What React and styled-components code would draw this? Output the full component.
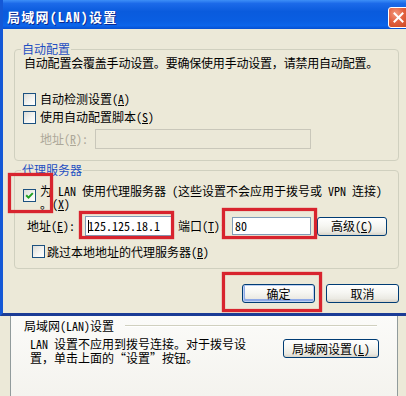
import React from "react";
import styled, { createGlobalStyle, css } from "styled-components";

const Global = createGlobalStyle`
  html, body { margin: 0; padding: 0; background: #ECE9D8; }
  body {
    font-family: "Noto Sans CJK SC", "Noto Sans CJK JP", sans-serif;
    font-size: 12px;
    color: #000;
    font-feature-settings: "hwid" 1;
    text-spacing-trim: space-all;
  }
  #root { width: 406px; height: 396px; overflow: hidden; }
  u { text-decoration: underline; text-underline-offset: 1px; }
`;

const Wide = styled.span`
  font-feature-settings: "hwid" 0;
  text-spacing-trim: space-all;
`;

const Screen = styled.div`
  position: relative;
  width: 406px;
  height: 396px;
  overflow: hidden;
  background: #ECE9D8;
`;

const Window = styled.div`
  width: 412px;
  box-sizing: border-box;
  border-left: 3px solid #1458d6;
  border-bottom: 3px solid #1b3c96;
  background: #ECE9D8;
`;

const TitleBar = styled.div`
  height: 29px;
  box-sizing: border-box;
  padding: 5px 3px 0 4px;
  display: flex;
  align-items: center;
  justify-content: space-between;
  background: linear-gradient(180deg, #3d8ff7 0%, #1c6ae9 12%, #0a5bdd 40%, #0a5ee2 72%, #0c65ea 88%, #0650d2 100%);
`;

const TitleText = styled.div`
  color: #fff;
  font-weight: bold;
  font-size: 13px;
  letter-spacing: 1.3px;
  line-height: 16px;
  text-shadow: 1px 1px 0 #0b2a8f;
`;

const CloseButton = styled.div`
  width: 21px;
  height: 21px;
  box-sizing: border-box;
  border: 1px solid #fff;
  border-radius: 3px;
  background: radial-gradient(circle at 35% 30%, #f39a7e 0%, #e2603f 45%, #c94520 100%);
  display: flex;
  align-items: center;
  justify-content: center;
`;

const DialogBody = styled.div`
  height: 284px;
  box-sizing: border-box;
  padding: 13px 13px 0 11px;
  display: flex;
  flex-direction: column;
`;

const Group = styled.fieldset`
  margin: ${(p) => p.$mt || 0}px 0 0;
  padding: 0 8px ${(p) => p.$pb}px 8px;
  border: 1px solid #d0d0bf;
  border-radius: 4px;
  min-width: 0;
  display: flex;
  flex-direction: column;
`;

const Legend = styled.legend`
  padding: 0 1px;
  margin-left: -2px;
  color: #1f4fc2;
  font-size: 12px;
  line-height: 14px;
`;

const Desc = styled.div`
  line-height: 14px;
  margin-left: 1px;
  white-space: nowrap;
  letter-spacing: -0.2px;
`;

const CheckRow = styled.div`
  display: flex;
  align-items: ${(p) => p.$align || "center"};
  height: ${(p) => (p.$h ? `${p.$h}px` : "auto")};
  margin-top: ${(p) => p.$mt || 0}px;
  margin-left: ${(p) => p.$ml || 0}px;
  gap: ${(p) => (p.$gap != null ? p.$gap : 4)}px;
`;

const CheckBox = styled.span`
  flex: none;
  width: 13px;
  height: 13px;
  box-sizing: border-box;
  border: 1px solid #1c5180;
  background: linear-gradient(135deg, #dcdcd7 0%, #f6f6f3 60%, #ffffff 100%);
  margin-top: ${(p) => p.$mt || 0}px;
  display: flex;
  align-items: center;
  justify-content: center;
`;

const Label = styled.span`
  line-height: ${(p) => p.$lh || 14}px;
  white-space: nowrap;
  color: ${(p) => (p.$disabled ? "#aca899" : "#000")};
`;

const FieldRow = styled.div`
  display: flex;
  align-items: center;
  height: 20px;
  margin-top: ${(p) => p.$mt || 0}px;
  margin-left: ${(p) => p.$ml || 0}px;
`;

const FieldLabel = styled.span`
  flex: none;
  width: ${(p) => p.$w}px;
  margin-left: ${(p) => p.$ml || 0}px;
  line-height: 14px;
  white-space: nowrap;
  color: ${(p) => (p.$disabled ? "#aca899" : "#000")};
`;

const TextBox = styled.div`
  flex: none;
  width: ${(p) => p.$w}px;
  height: ${(p) => p.$h}px;
  box-sizing: border-box;
  padding-left: 2px;
  display: flex;
  align-items: center;
  line-height: 14px;
  white-space: nowrap;
  ${(p) =>
    p.$disabled
      ? css`
          border: 1px solid #c9c7ba;
          background: #ebe8d8;
        `
      : css`
          border: 1px solid #7f9db9;
          background: #fff;
        `}
`;

const Caret = styled.span`
  display: inline-block;
  width: 1px;
  height: 13px;
  background: #000;
  margin-right: -1px;
`;

const Button = styled.div`
  flex: none;
  width: ${(p) => p.$w}px;
  height: ${(p) => p.$h || 19}px;
  margin-left: ${(p) => p.$ml || 0}px;
  margin-top: ${(p) => p.$mt || 0}px;
  box-sizing: border-box;
  border: 1px solid #003c74;
  border-radius: 3px;
  background: linear-gradient(180deg, #ffffff 0%, #f6f6f2 45%, #ebeae3 80%, #d8d4c9 100%);
  display: flex;
  align-items: center;
  justify-content: center;
  line-height: 14px;
  white-space: nowrap;
  ${(p) =>
    p.$default &&
    css`
      box-shadow: inset 0 0 0 1px #bcd0f2, inset 1px -2px 0 1px #8ea9e6;
    `}
`;

const ButtonRow = styled.div`
  display: flex;
  justify-content: flex-end;
  gap: 11px;
  margin-top: 15px;
`;

const BackArea = styled.div`
  height: 80px;
  display: flex;
  padding-left: 10px;
`;

const Panel = styled.div`
  width: 388px;
  box-sizing: border-box;
  border-left: 1px solid #919b9c;
  border-right: 1px solid #919b9c;
  background: linear-gradient(180deg, #fbfbf9 0%, #f4f3ee 100%);
  padding: 3px 18px 0 13px;
  display: flex;
  flex-direction: column;
`;

const SectionHeader = styled.div`
  display: flex;
  align-items: center;
  height: 14px;
  line-height: 14px;
`;

const SectionRule = styled.div`
  flex: 1;
  margin: 0 2px 0 11px;
  border-top: 1px solid #d0d0bf;
  border-bottom: 1px solid #ffffff;
`;

const SectionBody = styled.div`
  display: flex;
  align-items: flex-start;
  margin-top: 4px;
`;

const SectionText = styled.div`
  margin-left: 6px;
  line-height: 14px;
  white-space: nowrap;
`;

const SideButton = styled(Button)`
  margin-left: auto;
`;

const Highlight = styled.div`
  position: absolute;
  left: ${(p) => p.$x}px;
  top: ${(p) => p.$y}px;
  width: ${(p) => p.$w}px;
  height: ${(p) => p.$h}px;
  box-sizing: border-box;
  border: 3px solid #d8242e;
  box-shadow: 0 0 1px #d8242e, inset 0 0 1px #d8242e;
  pointer-events: none;
`;

function Check({ checked, mt }) {
  return (
    <CheckBox $mt={mt}>
      {checked && (
        <svg width="9" height="9" viewBox="0 0 9 9">
          <path d="M1.2 4.3 L3.5 6.6 L7.8 2.1" fill="none" stroke="#21a121" strokeWidth="2" />
        </svg>
      )}
    </CheckBox>
  );
}

export default function App() {
  return (
    <>
      <Global />
      <Screen>
        <Window>
          <TitleBar>
            <TitleText>局域网(LAN)设置</TitleText>
            <CloseButton>
              <svg width="11" height="11" viewBox="0 0 11 11">
                <path d="M1.5 1.5 L9.5 9.5 M9.5 1.5 L1.5 9.5" stroke="#fff" strokeWidth="2" strokeLinecap="square" />
              </svg>
            </CloseButton>
          </TitleBar>
          <DialogBody>
            <Group $pb={11}>
              <Legend>自动配置</Legend>
              <Desc>
                自动配置会覆盖手动设置<Wide>。</Wide>要确保使用手动设置<Wide>，</Wide>请禁用自动配置<Wide>。</Wide>
              </Desc>
              <CheckRow $mt={20} $h={18}>
                <Check />
                <Label>
                  自动检测设置(<u>A</u>)
                </Label>
              </CheckRow>
              <CheckRow $h={18}>
                <Check />
                <Label>
                  使用自动配置脚本(<u>S</u>)
                </Label>
              </CheckRow>
              <FieldRow $mt={3} $ml={17}>
                <FieldLabel $w={55} $disabled>
                  地址(<u>R</u>):
                </FieldLabel>
                <TextBox $w={216} $h={20} $disabled />
              </FieldRow>
            </Group>
            <Group $mt={2} $pb={8}>
              <Legend>代理服务器</Legend>
              <CheckRow $align="flex-start" $mt={7}>
                <Check checked mt={5} />
                <Label $lh={13}>
                  为 LAN 使用代理服务器 (这些设置不会应用于拨号或 VPN 连接)
                  <br />
                  <Wide>。</Wide>(<u>X</u>)
                </Label>
              </CheckRow>
              <FieldRow $mt={6} $ml={4}>
                <FieldLabel $w={58}>
                  地址(<u>E</u>):
                </FieldLabel>
                <TextBox $w={88} $h={20}>
                  <Caret />
                  125.125.18.1
                </TextBox>
                <FieldLabel $w={54} $ml={5}>
                  端口(<u>T</u>):
                </FieldLabel>
                <TextBox $w={79} $h={18}>80</TextBox>
                <Button $w={70} $h={19} $ml={6}>
                  高级(<u>C</u>)
                </Button>
              </FieldRow>
              <CheckRow $mt={7} $ml={9} $h={17} $gap={2}>
                <Check />
                <Label>
                  跳过本地地址的代理服务器(<u>B</u>)
                </Label>
              </CheckRow>
            </Group>
            <ButtonRow>
              <Button $w={73} $default>
                确定
              </Button>
              <Button $w={73}>取消</Button>
            </ButtonRow>
          </DialogBody>
        </Window>
        <BackArea>
          <Panel>
            <SectionHeader>
              局域网(LAN)设置
              <SectionRule />
            </SectionHeader>
            <SectionBody>
              <SectionText>
                LAN 设置不应用到拨号连接<Wide>。</Wide>对于拨号设
                <br />
                置<Wide>，</Wide>单击上面的<Wide>“</Wide>设置<Wide>”</Wide>按钮<Wide>。</Wide>
              </SectionText>
              <SideButton $w={96} $h={19} $mt={2}>
                局域网设置(<u>L</u>)
              </SideButton>
            </SectionBody>
          </Panel>
        </BackArea>
        <Highlight $x={8} $y={173} $w={45} $h={40} />
        <Highlight $x={79} $y={211} $w={95} $h={28} />
        <Highlight $x={222} $y={208} $w={95} $h={31} />
        <Highlight $x={222} $y={272} $w={100} $h={40} />
      </Screen>
    </>
  );
}
